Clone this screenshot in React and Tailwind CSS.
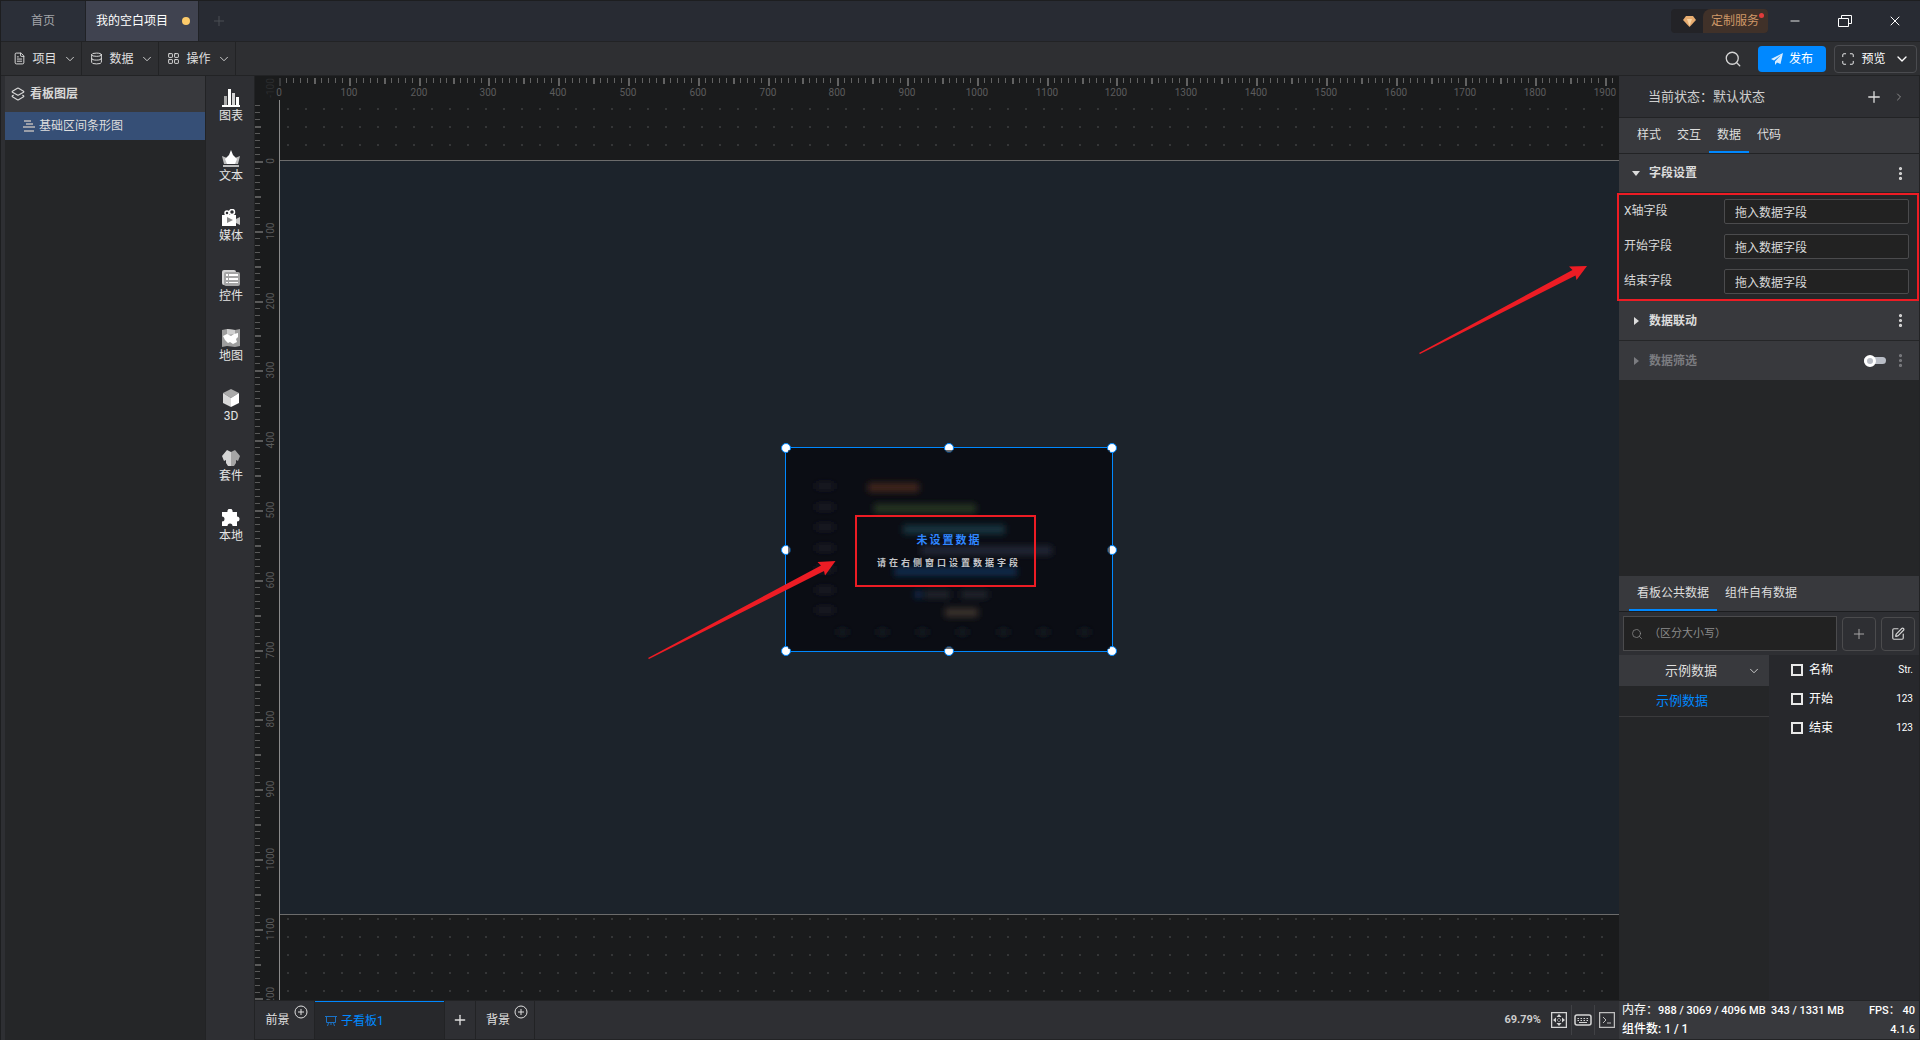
import React from "react";
import {
  ChevronDown,
  ChevronRight,
  Database,
  FileText,
  Layers2,
  LayoutGrid,
  Maximize,
  Minus,
  MoreVertical,
  Plus,
  Search,
  SquarePen,
  X,
} from "lucide-react";

const SCALE = 0.6979;

const menus = [
  { label: "项目", icon: FileText },
  { label: "数据", icon: Database },
  { label: "操作", icon: LayoutGrid },
];

const fields = ["X轴字段", "开始字段", "结束字段"];

const columns = [
  { name: "名称", type: "Str." },
  { name: "开始", type: "123" },
  { name: "结束", type: "123" },
];

const bars = [
  { x: 82, y: 35, w: 51, color: "#43271b" },
  { x: 88, y: 56, w: 102, color: "#273521" },
  { x: 117, y: 77, w: 102, color: "#123440" },
  { x: 135, y: 98, w: 131, color: "#242834" },
  { x: 108, y: 119, w: 123, color: "#0b294c" },
  { x: 159, y: 160, w: 33, color: "#3b3029" },
];

/* ---------- Tool icons ---------- */

const tools = [
  {
    label: "图表",
    icon: (
      <>
        <path fill="#a9a9a9" d="M2 7h3v9H2z" />
        <path fill="#fff" d="M6 0h3v16H6zM0 16h18v2H0z" />
        <path fill="#d5d5d5" d="M10 4h3v12h-3z" />
        <path fill="#fff" d="M14 8h3v8h-3z" />
      </>
    ),
  },
  {
    label: "文本",
    icon: (
      <>
        <path fill="#bdbdbd" d="M0 7l5 2h8l5-2-2 8H2z" />
        <path fill="#fff" d="M9 1l2 5 4 4-2 5H5L3 10l4-4z" />
        <path fill="#bdbdbd" d="M1 16h16v2H1z" />
      </>
    ),
  },
  {
    label: "媒体",
    icon: (
      <>
        <circle cx="5" cy="4" r="2" fill="none" stroke="#fff" strokeWidth="1.5" />
        <circle cx="10" cy="3" r="2.5" fill="none" stroke="#fff" strokeWidth="1.5" />
        <path fill="#fff" d="M0 6h14v11H0z" />
        <path fill="#c8c8c8" d="M14 10l4-2v8l-4-2z" />
        <path fill="#8a8a8a" d="M5 8l6 3-6 3z" />
      </>
    ),
  },
  {
    label: "控件",
    icon: (
      <>
        <rect x="0" y="1" width="14" height="15" rx="2" fill="#d5d5d5" />
        <rect x="2" y="3" width="16" height="14" rx="2" fill="#a5a5a5" />
        <path fill="#fff" d="M4 5h2v2H4zM7 5h9v2H7zM4 9h2v2H4zM7 9h9v2H7zM4 13h2v1H4zM7 13h9v1H7z" />
      </>
    ),
  },
  {
    label: "地图",
    icon: (
      <>
        <path fill="#9e9e9e" d="M0 1l5-1 8 1 5-1v17l-5 1-8-1-5 1z" />
        <path fill="#d0d0d0" d="M5 0l8 1v4L5 6z" />
        <path fill="#fff" d="M1 7l4-2 4 2 3-2 4-1v4l-2 2 1 3-4 2-3-2-2 1-3-3z" />
      </>
    ),
  },
  {
    label: "3D",
    icon: (
      <>
        <path fill="#a9a9a9" d="M9 0l8 4-8 5-8-5z" />
        <path fill="#d9d9d9" d="M1 4l8 5v9l-8-4z" />
        <path fill="#fff" d="M17 4L9 9v9l8-4z" />
      </>
    ),
  },
  {
    label: "套件",
    icon: (
      <>
        <path fill="#d5d5d5" d="M5 1l4 2v14H6l-2-3v-3l-2 1-2-5z" />
        <path fill="#a5a5a5" d="M13 1L9 3v14h3l2-3v-3l2 1 2-5z" />
      </>
    ),
  },
  {
    label: "本地",
    icon: (
      <path
        fill="#fff"
        d="M0 3h5.500a2.600 2.600 0 1 1 5 0H15v4.500a2.500 2.500 0 1 1 0 5V17h-4.500a2.500 2.500 0 0 0-5 0H0v-4.500a2.500 2.500 0 0 0 0-5z"
      />
    ),
  },
];

/* ---------- Window chrome ---------- */

function TitleBar() {
  return (
    <header className="flex h-10 shrink-0 items-stretch bg-[#282b33]">
      <button className="w-[85px] border-r border-[#202226] bg-[#2b2f38] text-xs text-[#a3a5a9]">
        首页
      </button>
      <button className="flex w-28 items-center justify-between bg-[#404350] pr-2 pl-2.5 text-xs text-white">
        我的空白项目
        <span className="size-2 rounded-full bg-[#fdcb6a]" />
      </button>
      <button aria-label="新建" className="w-10 border-l border-[#202226] pl-3 text-[#4b4e55]">
        <Plus size={16} strokeWidth={1.5} />
      </button>
      <div className="ml-auto flex items-center">
        <button className="mr-0.5 flex h-6 w-[97px] items-center overflow-hidden rounded-sm bg-[#232327] text-xs text-[#cf9868]">
          <span className="flex w-8 justify-center pl-1">
            <svg width="13" height="11" viewBox="0 0 13 11">
              <path fill="#e7ac70" d="M3 0h7l3 4-6.500 7L0 4z" />
              <path fill="#f9d4a3" d="M4 3h5L6.500 10z" />
            </svg>
          </span>
          <span className="flex h-full flex-1 items-center rounded-tl-lg bg-[#403129] pl-2">
            定制服务
            <span className="mb-3 size-[5px] rounded-full bg-[#e23b3b]" />
          </span>
        </button>
        <button aria-label="最小化" className="flex w-[50px] justify-center text-white">
          <Minus size={14} strokeWidth={1.5} />
        </button>
        <button aria-label="还原" className="flex w-[50px] justify-center text-white">
          <svg width="14" height="12" viewBox="0 0 14 12" fill="none" stroke="currentColor">
            <path d="M.5 3.500h10v8H.5zM3.500 3.500v-3h10v8h-3" />
          </svg>
        </button>
        <button aria-label="关闭" className="flex w-[50px] justify-center text-white">
          <X size={16} strokeWidth={1.5} />
        </button>
      </div>
    </header>
  );
}

function MenuBar() {
  return (
    <nav className="flex h-[35px] shrink-0 items-center border-t border-b border-[#222325] bg-[#2e2f32] pl-1">
      {menus.map(({ label, icon: Icon }) => (
        <button
          key={label}
          className="flex h-full w-[77px] items-center justify-center gap-1.5 border-r border-[#222325] pl-1 text-xs text-[#e0e0e0]"
        >
          <Icon size={13} strokeWidth={1.75} />
          {label}
          <ChevronDown size={14} strokeWidth={1.5} />
        </button>
      ))}
      <div className="ml-auto flex items-center pr-[3px]">
        <button aria-label="搜索" className="mr-4 text-[#d5d5d5]">
          <Search size={18} strokeWidth={1.75} />
        </button>
        <button className="mr-2 flex h-[26px] w-[68px] items-center justify-center gap-1.5 rounded-sm bg-[#0088ff] text-xs text-white">
          <svg width="12" height="12" viewBox="0 0 12 12" fill="#d7ecff">
            <path d="M12 0L0 6l3 1.500L10 2 4 8.500V12l2-2.500L9.500 11z" />
          </svg>
          发布
        </button>
        <button className="flex h-7 w-[83px] items-center justify-center gap-1.5 rounded-sm border border-[#4a4b4f] text-xs text-white">
          <Maximize size={14} strokeWidth={1.5} />
          预览
          <ChevronDown size={16} strokeWidth={2} className="ml-0.5" />
        </button>
      </div>
    </nav>
  );
}

function LayerPanel() {
  return (
    <aside className="w-[201px] shrink-0 border-r border-[#222325] bg-[#252628] text-xs">
      <h2 className="flex h-9 items-center gap-[5px] bg-[#38393d] pl-1.5 font-bold text-[#d8d8d8]">
        <Layers2 size={14} strokeWidth={2} />
        看板图层
      </h2>
      <button className="flex h-7 w-full items-center gap-1 bg-[#364f76] pl-[18px] text-[#dedede]">
        <svg width="12" height="12" viewBox="0 0 12 12" fill="#9a9ea8">
          <path d="M1 0h7v2H1zM3 3h7v2H3zM0 6h12v2H0zM1 10h10v2H1z" />
        </svg>
        基础区间条形图
      </button>
    </aside>
  );
}

function ToolBar() {
  return (
    <aside className="flex w-[49px] shrink-0 flex-col items-center border-r border-[#222325] bg-[#2e2f33] pt-[13px] pl-0.5">
      {tools.map((tool) => (
        <button
          key={tool.label}
          className="flex h-[60px] flex-col items-center text-xs font-medium text-[#e4e4e4]"
        >
          <svg width="18" height="18" viewBox="0 0 18 18">
            {tool.icon}
          </svg>
          <span className="leading-[18px] font-normal">{tool.label}</span>
        </button>
      ))}
    </aside>
  );
}

/* ---------- Stage ---------- */

function tickLength(i) {
  if (i % 10 === 0) return 8;
  return i % 5 === 0 ? 6 : 5;
}

function TopRuler() {
  const ticks = Array.from({ length: 193 }, (_, i) => i);
  return (
    <svg className="h-6 w-full shrink-0 text-[10px]">
      <text x="15" y="12" transform="rotate(-90 15 12)" textAnchor="middle" dominantBaseline="central" fill="#2c2d2f">
        -100
      </text>
      {ticks.map((i) => {
        const x = Math.round(24 + i * 10 * SCALE);
        return (
          <g key={i}>
            <rect
              x={x}
              y="2"
              width={i % 5 === 0 ? 2 : 1}
              height={tickLength(i)}
              fill={i === 0 ? "#3a3b3d" : "#626262"}
            />
            {i % 10 === 0 && (
              <text x={x} y="20" textAnchor="middle" fill="#5c5c5c">
                {i * 10}
              </text>
            )}
          </g>
        );
      })}
    </svg>
  );
}

function LeftRuler() {
  const ticks = Array.from({ length: 130 }, (_, i) => i - 8);
  return (
    <svg className="h-full w-6 shrink-0 text-[10px]">
      {ticks.map((i) => {
        const y = Math.round(61 + i * 10 * SCALE);
        return (
          <g key={i}>
            <rect x="0" y={y} width={tickLength(i)} height={i % 5 === 0 ? 2 : 1} fill="#5a5a5a" />
            {i % 10 === 0 && i >= 0 && (
              <text
                x="15"
                y={y}
                transform={`rotate(-90 15 ${y})`}
                textAnchor="middle"
                dominantBaseline="central"
                fill="#5c5c5c"
              >
                {i * 10}
              </text>
            )}
          </g>
        );
      })}
    </svg>
  );
}

function Handle({ className }) {
  return (
    <span
      className={`absolute size-2.5 -translate-x-1/2 -translate-y-1/2 rounded-full border border-[#0088ff] bg-white ${className}`}
    />
  );
}

function SelectedChart() {
  return (
    <div className="absolute top-[347px] left-[505px] h-[205px] w-[328px] border border-[#0088ff] bg-[#0b0e14]">
      <Handle className="top-0 left-0" />
      <Handle className="top-0 left-1/2" />
      <Handle className="top-0 left-full" />
      <Handle className="top-1/2 left-0" />
      <Handle className="top-1/2 left-full" />
      <Handle className="top-full left-0" />
      <Handle className="top-full left-1/2" />
      <Handle className="top-full left-full" />
      <div className="absolute inset-0.5 bg-[#0b0e14]/60" />
      <svg className="absolute inset-0 size-full">
        <filter id="soft" x="-10%" y="-10%" width="120%" height="120%">
          <feGaussianBlur stdDeviation="3" />
        </filter>
        <g filter="url(#soft)">
          {bars.map((b) => (
            <rect key={b.y} x={b.x} y={b.y} width={b.w} height="9" fill={b.color} />
          ))}
          {[37, 58, 78, 99, 120, 141, 161].map((y) => (
            <rect key={y} x="30" y={y - 2} width="18" height="6" fill="#1c1f27" />
          ))}
          {[56, 96, 136, 176, 217, 257, 298].map((x) => (
            <rect key={x} x={x - 5} y="181" width="11" height="6" fill="#191c23" />
          ))}
          <rect x="129" y="143" width="6" height="7" fill="#0b2f5c" />
          <rect x="138" y="143" width="26" height="7" fill="#23262f" />
          <rect x="175" y="143" width="27" height="7" fill="#23262f" />
        </g>
      </svg>
      <div className="relative flex h-full flex-col items-center justify-center gap-1.5 pt-1 font-bold">
        <p className="text-[11px] leading-4 tracking-[2px] text-[#2f86ff]">未设置数据</p>
        <p className="text-[9px] leading-4 tracking-[3px] text-[#c4c6ca]">请在右侧窗口设置数据字段</p>
      </div>
    </div>
  );
}

function Stage() {
  return (
    <div className="flex min-h-0 flex-1 flex-col overflow-hidden bg-[#1a1b1c]">
      <TopRuler />
      <div className="flex min-h-0 flex-1">
        <LeftRuler />
        <div className="relative flex-1 overflow-hidden border-l border-[#8a8a8a]">
          <svg className="absolute inset-0 size-full">
            <pattern id="dots" width="18" height="18" patternUnits="userSpaceOnUse">
              <rect x="7" y="8" width="2" height="2" fill="#353637" />
            </pattern>
            <rect width="100%" height="100%" fill="url(#dots)" />
          </svg>
          <div className="absolute top-[60px] left-0 h-[755px] w-[1340px] border-y border-[#6c6c6c] bg-[#1c232b]" />
          <SelectedChart />
          <div className="absolute top-[415px] left-[575px] h-[72px] w-[181px] border-2 border-[#ed1c24]" />
          <svg className="absolute inset-0 size-full" fill="#ed1c24">
            <path d="M1139 253L1292.500 170 1289 166.500 1307 166 1296.500 180 1295.500 175.500 1140 254z" />
            <path d="M368 558L541 465.500 537.500 462 555.500 461 545 475.500 544 471 369 559z" />
          </svg>
        </div>
      </div>
    </div>
  );
}

function CirclePlus() {
  return (
    <svg width="14" height="14" viewBox="0 0 14 14" fill="none" stroke="currentColor" className="mb-4">
      <circle cx="7" cy="7" r="6" />
      <path d="M7 4v6M4 7h6" />
    </svg>
  );
}

function BoardTabs() {
  return (
    <footer className="flex h-10 shrink-0 items-stretch border-y border-[#222325] bg-[#2e2f33] text-xs text-[#e0e0e0]">
      <button className="flex w-[60px] items-center justify-center gap-1 border-r border-[#222325] pl-1">
        前景
        <CirclePlus />
      </button>
      <button className="flex w-[129px] items-center gap-1 border-t border-[#0088ff] bg-[#27282b] pl-2.5 text-[#0088ff]">
        <svg width="12" height="11" viewBox="0 0 12 11" fill="none" stroke="#1a72c6">
          <path d="M0 1.500h12M1.500 1.500v6h9v-6M3.500 8l-1 3M8.500 8l1 3M6 8v2" />
        </svg>
        子看板1
      </button>
      <button aria-label="新建看板" className="flex w-8 items-center justify-center border-r border-l border-[#222325]">
        <Plus size={16} />
      </button>
      <button className="flex w-[59px] items-center justify-center gap-1 border-r border-[#222325] pl-1">
        背景
        <CirclePlus />
      </button>
      <div className="ml-auto flex items-center pr-1">
        <span className="mr-2.5 text-[11px] font-bold text-[#cccccc]">69.79%</span>
        <button aria-label="适应画布" className="mr-1">
          <svg width="16" height="16" viewBox="0 0 16 16" fill="none" stroke="#d5d5d5">
            <rect x=".5" y=".5" width="15" height="15" strokeWidth="1.500" />
            <path d="M8 6v4M6 8h4" strokeDasharray="1 2" />
            <path fill="#d5d5d5" stroke="none" d="M8 2l2.500 3h-5zM8 14l2.500-3h-5zM2 8l3-2.500v5zM14 8l-3-2.500v5z" />
          </svg>
        </button>
        <button aria-label="快捷键" className="mr-1 flex h-[30px] items-center border-x border-[#404145] px-0.5">
          <svg width="18" height="12" viewBox="0 0 18 12" fill="none" stroke="#d5d5d5">
            <rect x="1" y="1" width="16" height="10" rx="2" strokeWidth="1.500" />
            <path strokeDasharray="1.500 1.500" d="M3.500 4.500h11.500M3.500 6.500h11.500" />
            <path d="M5 8.500h8" />
          </svg>
        </button>
        <button aria-label="控制台">
          <svg width="16" height="16" viewBox="0 0 16 16" fill="none" stroke="#bdbdbd">
            <rect x=".5" y=".5" width="15" height="15" strokeWidth="1.500" />
            <path d="M4 5l3 3-3 3M8 11h4" />
          </svg>
        </button>
      </div>
    </footer>
  );
}

/* ---------- Property panel ---------- */

function SectionHeader({ title, open, muted, children }) {
  return (
    <div
      className={`flex items-center border-b border-[#252628] bg-[#38393d] pr-2.5 pl-3 text-xs font-bold ${
        open ? "h-[39px]" : "h-10"
      } ${muted ? "text-[#7b7c80]" : "text-[#dcdcdc]"}`}
    >
      <button className="flex items-center gap-2">
        <svg width="10" height="10" viewBox="0 0 10 10" fill="currentColor">
          <path d={open ? "M1 3h8L5 8z" : "M3 1l5 4-5 4z"} />
        </svg>
        {title}
      </button>
      <div className="ml-auto flex items-center gap-1.5">
        {children}
        <button aria-label={`${title}更多`}>
          <MoreVertical size={17} strokeWidth={2.5} />
        </button>
      </div>
    </div>
  );
}

function FieldSettings() {
  return (
    <div className="relative flex flex-col gap-2.5 pt-1.5 pr-2.5 pb-[7px] pl-[5px]">
      {fields.map((name, i) => (
        <div key={name} className="flex h-[25px] items-center">
          <label htmlFor={`field-${i}`} className="w-[100px] pb-0.5 text-xs text-[#d8d8d8]">
            {name}
          </label>
          <input
            id={`field-${i}`}
            placeholder="拖入数据字段"
            className="h-full min-w-0 flex-1 rounded-xs border border-[#4b4b4d] bg-[#222222] px-2.5 pt-0.5 text-xs placeholder:text-[#dadada]"
          />
        </div>
      ))}
      <div className="pointer-events-none absolute inset-y-0 right-0 -left-0.5 z-10 border-2 border-[#ed1c24]" />
    </div>
  );
}

function DataSource() {
  return (
    <div className="flex min-h-0 flex-1 flex-col">
      <div className="flex h-9 shrink-0 items-stretch border-b border-[#1c1d1f] bg-[#38393d] pl-2.5 text-xs text-[#dedede]">
        <button className="border-b-2 border-[#0088ff] px-2">看板公共数据</button>
        <button className="border-b-2 border-transparent px-2">组件自有数据</button>
      </div>
      <div className="flex h-[43px] shrink-0 items-center gap-[5px] bg-[#2e2f33] pr-1 pl-1">
        <div className="flex h-[35px] flex-1 items-center border border-[#4b4b4d] bg-[#222222] pl-[7px]">
          <Search size={12} strokeWidth={1.5} className="shrink-0 text-[#8b8b8b]" />
          <input
            aria-label="搜索字段"
            placeholder="（区分大小写）"
            className="min-w-0 flex-1 px-1.5 pt-0.5 text-[11px] placeholder:text-[#8b8b8b]"
          />
        </div>
        <button
          aria-label="添加数据"
          className="flex size-[34px] items-center justify-center rounded-sm border border-[#4b4b4d] text-[#a5a5a5]"
        >
          <Plus size={16} strokeWidth={1.5} />
        </button>
        <button
          aria-label="编辑数据"
          className="flex size-[34px] items-center justify-center rounded-sm border border-[#4b4b4d] text-[#d5d5d5]"
        >
          <SquarePen size={14} strokeWidth={2} />
        </button>
      </div>
      <div className="flex flex-1">
        <div className="flex w-[150px] flex-col text-[13px]">
          <button className="flex h-[31px] items-center justify-between bg-[#38393d] pr-2 pl-[46px] text-[#dedede]">
            示例数据
            <ChevronDown size={14} strokeWidth={1.5} />
          </button>
          <button className="h-[31px] border-b border-[#3a3a3c] pr-6 text-[#0088ff]">示例数据</button>
        </div>
        <div className="flex-1 bg-[#27282c] pr-1.5 pl-[22px]">
          {columns.map((col) => (
            <label key={col.name} className="flex h-[29px] items-center gap-1.5 text-xs text-white">
              <input type="checkbox" className="size-3 appearance-none border-2 border-[#e8e8e8] bg-[#27282c]" />
              {col.name}
              <span className="ml-auto text-[10px]">{col.type}</span>
            </label>
          ))}
        </div>
      </div>
    </div>
  );
}

function PropertyPanel() {
  return (
    <aside className="flex w-[301px] shrink-0 flex-col border-r border-[#222325] bg-[#252628]">
      <div className="flex h-[41px] shrink-0 items-center bg-[#2e2f33] pr-3.5 pl-[29px] text-[13px] text-[#cfcfcf]">
        当前状态：默认状态
        <button aria-label="添加状态" className="ml-auto text-[#dedede]">
          <Plus size={18} strokeWidth={1.75} />
        </button>
        <button aria-label="展开状态" className="ml-2.5 text-[#8b8b8b]">
          <ChevronRight size={12} strokeWidth={2} />
        </button>
      </div>
      <div className="flex h-[37px] shrink-0 items-stretch border-y border-[#222325] bg-[#38393d] pl-2.5 text-xs text-[#dedede]">
        {["样式", "交互", "数据", "代码"].map((tab) => (
          <button
            key={tab}
            className={`w-10 border-b-2 ${tab === "数据" ? "border-[#0088ff]" : "border-transparent"}`}
          >
            {tab}
          </button>
        ))}
      </div>
      <div className="h-[422px] shrink-0">
        <SectionHeader title="字段设置" open />
        <FieldSettings />
        <SectionHeader title="数据联动" />
        <SectionHeader title="数据筛选" muted>
          <input
            type="checkbox"
            role="switch"
            aria-label="启用数据筛选"
            className="flex h-[7px] w-[22px] appearance-none items-center rounded-full bg-[#b9bdc6] before:size-3 before:shrink-0 before:rounded-full before:border-[3px] before:border-white before:bg-[#b9bdc6]"
          />
        </SectionHeader>
      </div>
      <DataSource />
      <footer className="flex h-10 shrink-0 flex-col border-y border-[#222325] bg-[#38393d] pr-1 pl-[3px] text-xs leading-[19px] text-white">
        <div className="flex items-center">
          <span>内存：</span>
          <span className="text-[11px] font-medium">988 / 3069 / 4096 MB&nbsp; 343 / 1331 MB</span>
          <span className="ml-auto text-[11px] font-medium">FPS： 40</span>
        </div>
        <div className="flex justify-between font-medium">
          <span>组件数: 1 / 1</span>
          <span className="text-[11px]">4.1.6</span>
        </div>
      </footer>
    </aside>
  );
}

export default function App() {
  return (
    <div className="flex h-screen flex-col overflow-hidden border-t border-l border-[#1d1e20] bg-[#2e2f33] font-['Roboto','Noto_Sans_CJK_SC',sans-serif]">
      <TitleBar />
      <MenuBar />
      <div className="flex min-h-0 flex-1 pl-1">
        <LayerPanel />
        <ToolBar />
        <main className="flex min-w-0 flex-1 flex-col">
          <Stage />
          <BoardTabs />
        </main>
        <PropertyPanel />
      </div>
    </div>
  );
}
